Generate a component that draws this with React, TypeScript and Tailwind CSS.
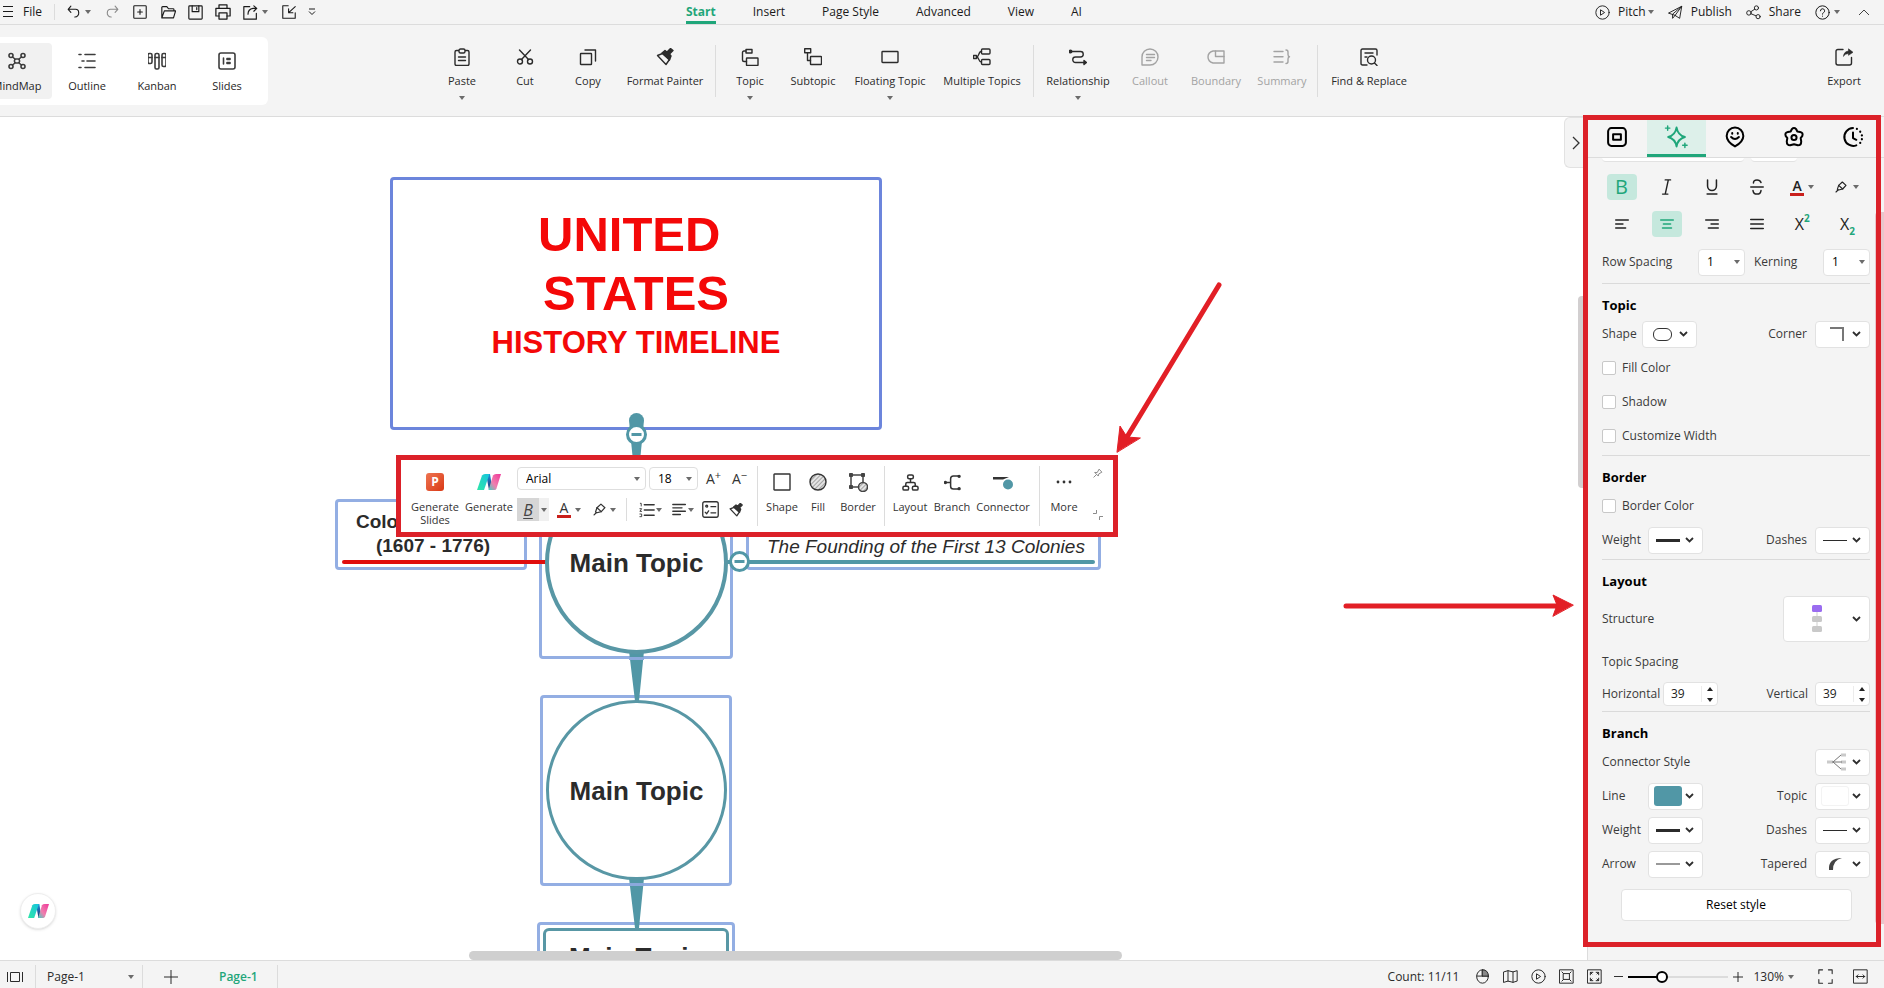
import { useState, type ReactNode } from 'react';
import clsx from 'clsx';

interface IconProps {
    size?: number;
    className?: string;
    width?: number;
    children: ReactNode;
}

const Icon = ({ size = 18, className, width = 1.4, children }: IconProps) => (
    <svg
        width={size}
        height={size}
        viewBox="0 0 18 18"
        fill="none"
        stroke="currentColor"
        strokeWidth={width}
        strokeLinecap="round"
        strokeLinejoin="round"
        className={clsx('shrink-0', className)}
        aria-hidden="true"
    >
        {children}
    </svg>
);

const Caret = ({ className }: { className?: string }) => (
    <svg width="6" height="4" viewBox="0 0 6 4" className={clsx('shrink-0 fill-[#6b6b6b]', className)} aria-hidden="true">
        <path d="M0 0h6L3 4z" />
    </svg>
);

const Chevron = () => (
    <svg width="9" height="6" viewBox="0 0 9 6" className="shrink-0" fill="none" stroke="#2f2f2f" strokeWidth="1.800" aria-hidden="true">
        <path d="M1 1l3.5 3.5L8 1" />
    </svg>
);

const Brand = ({ id, size }: { id: string; size: number }) => (
    <svg width={size} height={size * 0.75} viewBox="0 0 24 18" aria-hidden="true">
        <defs>
            <linearGradient id={`${id}-a`} x1="0" y1="1" x2="1" y2="0">
                <stop offset="0" stopColor="#2fe6a8" />
                <stop offset="1" stopColor="#16c5dd" />
            </linearGradient>
            <linearGradient id={`${id}-b`} x1="0" y1="0" x2="0" y2="1">
                <stop offset="0" stopColor="#1d8fe0" />
                <stop offset="1" stopColor="#22306e" />
            </linearGradient>
            <linearGradient id={`${id}-c`} x1="1" y1="0" x2="0" y2="1">
                <stop offset="0" stopColor="#f0389a" />
                <stop offset="0.6" stopColor="#ef7fae" />
                <stop offset="1" stopColor="#38d6c0" />
            </linearGradient>
        </defs>
        <path d="M9 1h4l2.500 16H12z" fill={`url(#${id}-b)`} />
        <path d="M5 2.5Q6 1 8 1h4.500L7 17H0z" fill={`url(#${id}-a)`} />
        <path d="M16 2.5Q17 1 19 1h5l-4.500 14.500Q19 17 17.500 17H11.500z" fill={`url(#${id}-c)`} />
    </svg>
);

const icons = {
    mindmap: (
        <>
            <rect x="6.500" y="7" width="5" height="4" rx="1.500" />
            <circle cx="3" cy="3.500" r="2" />
            <circle cx="15" cy="3.500" r="2" />
            <circle cx="3" cy="14.500" r="2" />
            <circle cx="15" cy="14.500" r="2" />
            <path d="M4.500 5L7 7M13.500 5L11 7M4.500 13L7 11M13.500 13L11 11" />
        </>
    ),
    outline: <path d="M1 2.500h2M7 2.500h10M4 9h2M9 9h8M1 15.500h2M7 15.500h10" />,
    kanban: (
        <>
            <rect x="0" y="1.500" width="4" height="10" rx="1.500" />
            <rect x="7" y="1.500" width="4" height="15.500" rx="1.500" />
            <rect x="14" y="1.500" width="4" height="13" rx="1.500" />
            <path d="M0 5.500h4M7 5.500h4M14 5.500h4" />
        </>
    ),
    slides: (
        <>
            <rect x="1" y="1" width="16" height="16" rx="2" />
            <path d="M5.500 6v6M9 6.500h3v1H9zM9 10.500h3v1H9z" />
        </>
    ),
    paste: (
        <>
            <rect x="2" y="2.500" width="14" height="15" rx="1.500" />
            <rect x="6" y="1" width="6" height="4" rx="1.500" className="fill-[#f4f4f4]" />
            <path d="M5.500 9h7M5.500 12.500h7" />
        </>
    ),
    cut: (
        <>
            <circle cx="4" cy="13.500" r="2.500" />
            <circle cx="14" cy="13.500" r="2.500" />
            <path d="M3.500 2l9 9.500M14.500 2l-9 9.500" />
        </>
    ),
    copy: (
        <>
            <rect x="1.500" y="5.500" width="11" height="11" rx="0.500" />
            <path d="M6 2h10.500v11" />
        </>
    ),
    painter: (
        <>
            <path d="M1.500 7.500l5-2 7 6-3.500 5z" />
            <path d="M6 5l3-2.500 2 1.500 3.500-3.500L17 2.500 13.500 6l1.500 2-1.500 4z" fill="currentColor" />
        </>
    ),
    topic: (
        <>
            <rect x="5" y="1.500" width="6" height="3.500" />
            <rect x="5.500" y="10" width="11.500" height="7.500" rx="0.500" />
            <path d="M5 3H3Q1.500 3 1.500 4.500V12Q1.500 13.500 3 13.500h2.500" />
        </>
    ),
    subtopic: (
        <>
            <rect x="0.700" y="0.700" width="6" height="4" />
            <rect x="6.500" y="8.500" width="11" height="8" rx="0.500" />
            <path d="M3.500 5v7.500h3" />
        </>
    ),
    floating: <rect x="1" y="3.500" width="16" height="11" rx="0.700" />,
    multiple: (
        <>
            <rect x="8.500" y="1" width="8.500" height="5" rx="1" />
            <rect x="8.500" y="11.500" width="8.500" height="5" rx="1" />
            <rect x="0.500" y="7.500" width="3" height="3" />
            <path d="M8.500 3.500C5 3.500 6.500 9 3.500 9c3 0 1.500 5 5 5" />
        </>
    ),
    relationship: (
        <>
            <path d="M2 3.500h9.500a2.700 2.700 0 0 1 0 5.500h-5a2.700 2.700 0 0 0 0 5.500H15" />
            <circle cx="1.500" cy="3.500" r="1.300" fill="currentColor" />
            <path d="M15 12.500l2.500 2-2.500 2z" fill="currentColor" />
        </>
    ),
    callout: (
        <>
            <path d="M1 17V9a8 8 0 1 1 8 8z" />
            <path d="M5.500 6.500h8M5.500 9.500h8M5.500 12.500h4.500" />
        </>
    ),
    boundary: (
        <>
            <path d="M6 3h11v12H6Q1 13.500 1 9t5-6z" />
            <path d="M8.500 3v5.500H17" />
        </>
    ),
    summary: <path d="M1 3.500h9M1 8.700h9M1 14h9M13 2q2 0 2 2v2.500q0 2 1.500 2.200-1.500.3-1.500 2.300v2.500q0 2-2 2" />,
    find: (
        <>
            <path d="M7 17H2.500Q1 17 1 15.500v-13Q1 1 2.500 1h13Q17 1 17 2.500V7M5 5h8M5 9h2" />
            <circle cx="11.500" cy="12" r="4" />
            <path d="M14.500 15l2.500 2.500" />
        </>
    ),
    export: (
        <>
            <path d="M8 1.500H3Q1 1.500 1 3.500v11.500Q1 17 3 17h11.500q2 0 2-2V9.500" />
            <path d="M8.500 8q.5-4.500 5-5V.8L18 4.300l-4.500 3V5.500Q10 5.500 8.500 8z" fill="currentColor" strokeWidth="0.600" />
        </>
    ),
    undo: <path d="M5 1.500L1.500 5.500 5 9.500M2 5.500h9a4 4 0 0 1 4 4v0a5 5 0 0 1-5 6" />,
    redo: <path d="M13 1.500l3.500 4-3.500 4M16 5.500H7a4 4 0 0 0-4 4v0a5 5 0 0 0 5 6" />,
    newFile: (
        <>
            <rect x="1" y="1" width="16" height="16" rx="1" />
            <path d="M9 6v6M6 9h6" />
        </>
    ),
    folder: <path d="M1 15.500V3q0-1 1-1h5l2 2.500h5.500q1 0 1 1V7M1 15.500L4 7h13.500L15 15.500z" />,
    save: (
        <>
            <rect x="1" y="1" width="16" height="16" rx="1" />
            <path d="M5 1v7h8V1M10.500 3v2.500" />
        </>
    ),
    print: (
        <>
            <path d="M4.500 5V1h9v4M4.500 13.500H1V5h16v8.500h-3.500" />
            <rect x="4.500" y="10" width="9" height="7" />
        </>
    ),
    shareOut: <path d="M8 2H1v15h15v-7M6 11q0-6 6-7h4M13 1l3.500 3L13 7.500" />,
    importIn: <path d="M8 1H1v16h16v-7M17 2L9 9.500M8.500 5v5H14" />,
    play: (
        <>
            <circle cx="9" cy="9" r="8" />
            <path d="M7 6l4.500 3L7 12z" />
        </>
    ),
    plane: <path d="M1 9.500L16.500 1.500 14 16l-5.500-3.500zM8.500 12.500L16.500 1.500 5.500 11v5l3-3.500" />,
    share: (
        <>
            <circle cx="3.500" cy="9.500" r="2.700" />
            <circle cx="12.500" cy="3.500" r="2.500" />
            <circle cx="14.500" cy="14" r="2.500" />
            <path d="M6 8l4.500-3M6 10.500l6 2.500" />
        </>
    ),
    help: (
        <>
            <circle cx="9" cy="9" r="8" />
            <path d="M6.500 7a2.500 2.500 0 1 1 3.500 2.300q-1 .5-1 1.700M9 13.300v.2" />
        </>
    ),
    list: (
        <>
            <path d="M6 3h11M6 9h11M6 15h11" />
            <path d="M1.500 1.500h1V4.500M1 7.500h2l-2 3h2M1 13.500h2v3H1" strokeWidth="1" />
        </>
    ),
    pen: (
        <>
            <path d="M3.500 12.500L5.500 6.500 11 1.500l5.500 5-5 5.500-6 1.500z" />
            <path d="M5.500 6.500l6 5.500M1.500 16.500l3-3" />
        </>
    ),
    checklist: (
        <>
            <rect x="0.800" y="0.800" width="16.400" height="16.400" rx="2" />
            <circle cx="5" cy="5.500" r="1" />
            <path d="M3.500 12l1.500 1.500 2-3M9.500 6h5M9.500 12.500h5" />
        </>
    ),
    pin: <path d="M1.500 16.500L6 12M3.500 8.500l6 6 1-4 5.500-3L11 2 8 7.500z" />,
};

const MENUS = ['Start', 'Insert', 'Page Style', 'Advanced', 'View', 'AI'];

const VIEWS = [
    { label: 'MindMap', icon: icons.mindmap },
    { label: 'Outline', icon: icons.outline },
    { label: 'Kanban', icon: icons.kanban },
    { label: 'Slides', icon: icons.slides },
];

interface RibbonItem {
    label: string;
    icon: ReactNode;
    width: string;
    caret?: boolean;
    disabled?: boolean;
}

const RIBBON: RibbonItem[][] = [
    [
        { label: 'Paste', icon: icons.paste, width: 'w-[62px]', caret: true },
        { label: 'Cut', icon: icons.cut, width: 'w-16' },
        { label: 'Copy', icon: icons.copy, width: 'w-[62px]' },
        { label: 'Format Painter', icon: icons.painter, width: 'w-[92px]' },
    ],
    [
        { label: 'Topic', icon: icons.topic, width: 'w-[62px]', caret: true },
        { label: 'Subtopic', icon: icons.subtopic, width: 'w-16' },
        { label: 'Floating Topic', icon: icons.floating, width: 'w-[90px]', caret: true },
        { label: 'Multiple Topics', icon: icons.multiple, width: 'w-[94px]' },
    ],
    [
        { label: 'Relationship', icon: icons.relationship, width: 'w-[82px]', caret: true },
        { label: 'Callout', icon: icons.callout, width: 'w-[62px]', disabled: true },
        { label: 'Boundary', icon: icons.boundary, width: 'w-[70px]', disabled: true },
        { label: 'Summary', icon: icons.summary, width: 'w-[62px]', disabled: true },
    ],
    [{ label: 'Find & Replace', icon: icons.find, width: 'w-24' }],
];

const RibbonButton = ({ label, icon, width, caret, disabled }: RibbonItem) => (
    <button
        type="button"
        disabled={disabled}
        className={clsx('flex h-full flex-col items-center pt-[23px]', width, disabled ? 'text-[#a3a3a3]' : 'text-[#2b2b2b]')}
    >
        <Icon>{icon}</Icon>
        <span className="mt-[7px] whitespace-nowrap text-[11px] leading-4">{label}</span>
        {caret && <Caret className="mt-[7px]" />}
    </button>
);

const TopBar = () => (
    <header className="flex h-[25px] shrink-0 items-center justify-between border-b border-[#dcdcdc] text-xs leading-4 text-[#1a1a1a]">
        <div className="flex w-[686px] items-center">
            <button type="button" className="flex items-center gap-2 pr-3">
                <svg width="15" height="12" viewBox="0 0 15 12" stroke="currentColor" aria-hidden="true">
                    <path d="M3 .5h10M3 5.500h10M3 10.500h10" />
                </svg>
                File
            </button>
            <span className="h-4 w-px bg-[#dcdcdc]" />
            <button type="button" aria-label="Undo" className="ml-3 flex items-center gap-1">
                <Icon size={14}>{icons.undo}</Icon>
                <Caret />
            </button>
            <button type="button" aria-label="Redo" className="ml-3.5 text-[#8a8a8a]">
                <Icon size={14}>{icons.redo}</Icon>
            </button>
            <button type="button" aria-label="New" className="ml-3.5">
                <Icon size={14}>{icons.newFile}</Icon>
            </button>
            <button type="button" aria-label="Open" className="ml-3.5">
                <Icon size={15}>{icons.folder}</Icon>
            </button>
            <button type="button" aria-label="Save" className="ml-3">
                <Icon size={15}>{icons.save}</Icon>
            </button>
            <button type="button" aria-label="Print" className="ml-3">
                <Icon size={16}>{icons.print}</Icon>
            </button>
            <button type="button" aria-label="Send" className="ml-3 flex items-center gap-1">
                <Icon size={15}>{icons.shareOut}</Icon>
                <Caret />
            </button>
            <button type="button" aria-label="Import" className="ml-3.5">
                <Icon size={14}>{icons.importIn}</Icon>
            </button>
            <button type="button" aria-label="Customize" className="ml-3">
                <svg width="8" height="8" viewBox="0 0 8 8" fill="none" stroke="currentColor" aria-hidden="true">
                    <path d="M1 1h6M1 3.500l3 3 3-3" />
                </svg>
            </button>
        </div>
        <nav className="flex h-full flex-1 gap-[37px]">
            {MENUS.map((menu, index) => (
                <button
                    key={menu}
                    type="button"
                    className={clsx(
                        'h-full border-b-3 pt-0.5',
                        index === 0 ? 'border-[#1fa67a] font-bold text-[#1fa67a]' : 'border-transparent'
                    )}
                >
                    {menu}
                </button>
            ))}
        </nav>
        <div className="flex items-center pr-3.5">
            <button type="button" className="flex items-center">
                <Icon size={15} width={1.1} className="mr-2">{icons.play}</Icon>
                Pitch
                <Caret className="ml-0.5" />
            </button>
            <button type="button" className="ml-3.5 flex items-center gap-2">
                <Icon size={15} width={1.1}>{icons.plane}</Icon>
                Publish
            </button>
            <button type="button" className="ml-3.5 flex items-center gap-2">
                <Icon size={15} width={1.1}>{icons.share}</Icon>
                Share
            </button>
            <button type="button" aria-label="Help" className="ml-3.5 flex items-center gap-1">
                <Icon size={15} width={1.2}>{icons.help}</Icon>
                <Caret />
            </button>
            <button type="button" aria-label="Collapse ribbon" className="ml-[18px]">
                <svg width="12" height="7" viewBox="0 0 12 7" fill="none" stroke="#444" aria-hidden="true">
                    <path d="M1 6l5-5 5 5" />
                </svg>
            </button>
        </div>
    </header>
);

const Ribbon = () => (
    <div className="flex h-[92px] shrink-0 items-start border-b border-[#dcdcdc]">
        <div className="mt-3 flex h-[68px] w-[268px] shrink-0 items-center justify-end overflow-hidden rounded-r-md bg-white pr-1.5">
            {VIEWS.map((view, index) => (
                <button
                    key={view.label}
                    type="button"
                    className={clsx(
                        'flex h-14 w-[70px] shrink-0 flex-col items-center rounded pt-[9px] text-[#3c3c3c]',
                        index === 0 && 'bg-[#f1f1f1]'
                    )}
                >
                    <Icon width={1.6}>{view.icon}</Icon>
                    <span className="mt-2 text-[11px] leading-4 text-[#1f1f1f]">{view.label}</span>
                </button>
            ))}
        </div>
        <div className="ml-[163px] flex h-full">
            {RIBBON.map((group, index) => (
                <div key={index} className="flex h-full">
                    {index > 0 && <span className="ml-1 mr-[3px] mt-5 h-[52px] w-px bg-[#dcdcdc]" />}
                    {group.map((item) => (
                        <RibbonButton key={item.label} {...item} />
                    ))}
                </div>
            ))}
        </div>
        <div className="ml-auto h-full pr-2.5">
            <RibbonButton label="Export" icon={icons.export} width="w-[60px]" />
        </div>
    </div>
);

const ToolButton = ({ label, children, className }: { label: string; children: ReactNode; className: string }) => (
    <button type="button" className={clsx('flex flex-col items-center', className)}>
        <span className="flex h-6 items-center">{children}</span>
        <span className="mt-1.5 text-center text-[11px] leading-[13px]">{label}</span>
    </button>
);

const Hatch = ({ cx, cy, r }: { cx: number; cy: number; r: number }) => (
    <>
        <defs>
            <pattern id="hatch" width="3" height="3" patternUnits="userSpaceOnUse" patternTransform="rotate(45)">
                <rect width="3" height="3" fill="#e4e4e4" stroke="none" />
                <path d="M0 0v3" stroke="#8e8e8e" strokeWidth="1.500" />
            </pattern>
        </defs>
        <circle cx={cx} cy={cy} r={r} fill="url(#hatch)" />
    </>
);

const FloatingToolbar = () => (
    <div
        role="toolbar"
        aria-label="Topic format"
        className="absolute left-[396px] top-[338px] flex h-[82px] w-[722px] items-start border-5 border-[#dc2129] bg-white pt-1.5 text-[#333]"
    >
        <div className="flex pl-1.5 pt-1">
            <ToolButton label="Generate Slides" className="w-[56px]">
                <span className="flex size-[18px] items-center justify-center rounded-[3px] bg-linear-to-br from-[#ee7350] to-[#d9370f] text-xs font-bold text-white">
                    P
                </span>
            </ToolButton>
            <ToolButton label="Generate" className="w-[52px]">
                <Brand id="toolbar" size={24} />
            </ToolButton>
        </div>
        <div className="flex flex-col gap-2 pl-0.5 pt-px">
            <div className="flex h-[23px] items-center">
                <label className="relative flex items-center">
                    <select aria-label="Font family" className="h-[23px] w-[129px] appearance-none rounded border border-[#dedede] pl-2 text-xs text-black">
                        <option>Arial</option>
                    </select>
                    <Caret className="absolute right-1.5" />
                </label>
                <label className="relative ml-[3px] flex items-center">
                    <select aria-label="Font size" className="h-[23px] w-[49px] appearance-none rounded border border-[#dedede] pl-2 text-xs text-black">
                        <option>18</option>
                    </select>
                    <Caret className="absolute right-1.5" />
                </label>
                <button type="button" aria-label="Increase font size" className="ml-2 flex w-4 text-sm leading-5">
                    A<sup className="top-0 text-[11px] leading-3">+</sup>
                </button>
                <button type="button" aria-label="Decrease font size" className="ml-2.5 flex w-4 text-sm leading-5">
                    A<sup className="top-0 text-[11px] leading-3">−</sup>
                </button>
            </div>
            <div className="flex h-[23px] items-center">
                <button type="button" aria-label="Bold" className="flex h-[23px] w-8 items-center bg-[#f0f0f0]">
                    <span className="flex h-full w-[22px] items-center justify-center bg-[#d6d6d6] text-base font-medium italic leading-5 text-[#444] underline underline-offset-2">
                        B
                    </span>
                    <Caret className="ml-0.5" />
                </button>
                <button type="button" aria-label="Font color" className="ml-2 flex items-center gap-1">
                    <span className="h-[17px] w-3.5 border-b-3 border-[#c9201c] text-center text-sm font-medium leading-[14px]">A</span>
                    <Caret />
                </button>
                <button type="button" aria-label="Highlight" className="ml-3 flex items-center gap-1">
                    <Icon size={13} width={1.700}>{icons.pen}</Icon>
                    <Caret />
                </button>
                <span className="ml-2.5 h-[23px] w-px bg-[#dcdcdc]" />
                <button type="button" aria-label="Numbering" className="ml-3 flex items-center gap-px">
                    <Icon size={16} width={1.700}>{icons.list}</Icon>
                    <Caret />
                </button>
                <button type="button" aria-label="Alignment" className="ml-2.5 flex items-center gap-px">
                    <Icon size={15} width={1.700}>
                        <path d="M1 3h15M1 7h11M1 11h15M1 15h9" />
                    </Icon>
                    <Caret />
                </button>
                <button type="button" aria-label="Checklist" className="ml-2">
                    <Icon size={17}>{icons.checklist}</Icon>
                </button>
                <button type="button" aria-label="Format painter" className="ml-2.5">
                    <Icon size={14} width={1.700}>{icons.painter}</Icon>
                </button>
            </div>
        </div>
        <span className="ml-[9px] h-[60px] w-px bg-[#dcdcdc]" />
        <div className="flex pl-1 pt-1">
            <ToolButton label="Shape" className="w-10">
                <Icon>
                    <rect x="1" y="1" width="16" height="16" rx="0.500" />
                </Icon>
            </ToolButton>
            <ToolButton label="Fill" className="w-8">
                <Icon>
                    <Hatch cx={9} cy={9} r={8} />
                </Icon>
            </ToolButton>
            <ToolButton label="Border" className="w-12">
                <svg width="20" height="20" viewBox="0 0 20 20" fill="none" stroke="#444" strokeWidth="1.500" aria-hidden="true">
                    <rect x="3" y="3" width="12" height="12" />
                    <path d="M1.500 1.500h3v3h-3zM13.500 1.500h3v3h-3zM1.500 13.500h3v3h-3z" fill="#444" strokeWidth="1" />
                    <Hatch cx={15} cy={15} r={4.500} />
                </svg>
            </ToolButton>
        </div>
        <span className="ml-0.5 h-[60px] w-px bg-[#dcdcdc]" />
        <div className="flex pl-1 pt-1">
            <ToolButton label="Layout" className="w-[42px]">
                <Icon size={17} width={1.600}>
                    <rect x="6" y="1" width="6" height="4" rx="1.500" />
                    <rect x="1" y="13" width="6" height="4" rx="1.500" />
                    <rect x="11" y="13" width="6" height="4" rx="1.500" />
                    <path d="M9 5v3M4 13v-2.500Q4 9 5.500 9h7Q14 9 14 10.500V13" />
                </Icon>
            </ToolButton>
            <ToolButton label="Branch" className="w-[42px]">
                <Icon size={17} width={1.600}>
                    <circle cx="1.500" cy="9" r="1" fill="currentColor" />
                    <path d="M3 9h4M16 2h-6Q7 2 7 5v8q0 3 3 3h6" />
                    <circle cx="16" cy="2.500" r="1" fill="currentColor" />
                    <circle cx="16" cy="15.500" r="1" fill="currentColor" />
                </Icon>
            </ToolButton>
            <ToolButton label="Connector" className="w-[60px]">
                <svg width="22" height="16" viewBox="0 0 22 16" aria-hidden="true">
                    <path d="M1 3h16l-6 2.500H1z" fill="#333" />
                    <circle cx="16" cy="10.500" r="5" fill="#5197a6" />
                </svg>
            </ToolButton>
        </div>
        <span className="ml-1.5 h-[60px] w-px bg-[#dcdcdc]" />
        <div className="flex pl-1 pt-1">
            <ToolButton label="More" className="w-10">
                <svg width="16" height="4" viewBox="0 0 16 4" fill="#333" aria-hidden="true">
                    <circle cx="2" cy="2" r="1.400" />
                    <circle cx="8" cy="2" r="1.400" />
                    <circle cx="14" cy="2" r="1.400" />
                </svg>
            </ToolButton>
        </div>
        <div className="ml-auto flex h-full flex-col justify-between pb-3 pr-2.5 pt-0.5 text-[#8c8c8c]">
            <button type="button" aria-label="Pin toolbar">
                <Icon size={10} width={1.800}>{icons.pin}</Icon>
            </button>
            <button type="button" aria-label="Shrink toolbar">
                <svg width="10" height="10" viewBox="0 0 10 10" fill="none" stroke="currentColor" aria-hidden="true">
                    <path d="M0 3.500h3.500V0M10 6.500H6.500V10" />
                </svg>
            </button>
        </div>
    </div>
);

const Diagram = () => (
    <div className="relative min-h-0 flex-1 overflow-hidden [font-family:'Liberation_Sans',Arial,sans-serif]">
        <div className="absolute left-[390px] top-[60px] flex h-[253px] w-[492px] flex-col items-center rounded border-3 border-[#6c85dc] pt-[25px] font-bold text-[#f40808]">
            <p className="whitespace-pre text-[49px] leading-[59px]">{'UNITED '}</p>
            <p className="text-[49px] leading-[59px]">STATES</p>
            <p className="text-[31px] leading-10">HISTORY TIMELINE</p>
        </div>

        <div className="absolute left-[335px] top-[382px] flex h-[71px] w-[192px] flex-col items-center rounded border-3 border-[#93aee3] pl-1 pt-2 text-[19px] font-bold leading-6 text-[#2b2b2b]">
            <span className="self-start pl-3.5">Colo</span>
            <span>(1607 - 1776)</span>
        </div>
        <div className="absolute left-[746px] top-[382px] h-[71px] w-[355px] rounded border-3 border-[#93aee3] pl-[18px] pt-[33px] text-[19px] italic leading-6 text-[#2b2b2b]">
            The Founding of the First 13 Colonies
        </div>
        <div className="absolute left-[539px] top-[348px] h-[194px] w-[194px] rounded border-3 border-[#93aee3]" />
        <div className="absolute left-[540px] top-[578px] h-[191px] w-[192px] rounded border-3 border-[#93aee3]" />
        <div className="absolute left-[537px] top-[805px] h-[80px] w-[198px] rounded border-3 border-[#93aee3]" />

        <svg className="absolute left-0 top-0 h-full w-full" aria-hidden="true">
            <path d="M629 303.500a7.500 7.500 0 0 1 15 0L639 354h-5z" fill="#5197a6" />
            <path d="M629 534h15l-5 50h-4zM629 761h15l-5 50h-4z" fill="#5197a6" />
            <path d="M629 541.500h15M629 767.500h15" stroke="#8ba9dc" strokeWidth="3" />
            <path d="M344 445h203" stroke="#e00d0d" strokeWidth="4" strokeLinecap="round" />
            <path d="M728 445h365" stroke="#5197a6" strokeWidth="4" strokeLinecap="round" />
            <g fill="white" stroke="#5197a6" strokeWidth="3">
                <circle cx="636.500" cy="317.500" r="9" />
                <circle cx="739.500" cy="444.500" r="9" />
                <path d="M631.500 317.500h10M734.500 444.500h10" />
            </g>
        </svg>

        <div className="absolute left-[545px] top-[354px] flex h-[183px] w-[183px] items-center justify-center rounded-full border-4 border-[#5897a5] bg-white pt-0.5 text-[26px] font-bold text-[#2b2b2b]">
            Main Topic
        </div>
        <div className="absolute left-[546px] top-[583px] flex h-[180px] w-[181px] items-center justify-center rounded-full border-3 border-[#5897a5] bg-white pt-0.5 text-[26px] font-bold text-[#2b2b2b]">
            Main Topic
        </div>
        <div className="absolute left-[543px] top-[811px] flex h-[60px] w-[186px] justify-center rounded-md border-3 border-[#5897a5] bg-white pt-2.5 text-[26px] font-bold leading-8 text-[#2b2b2b]">
            Main Topic
        </div>

        <svg className="absolute left-0 top-0 h-full w-full" aria-hidden="true">
            <g stroke="#e21f26" strokeWidth="5" strokeLinecap="round" fill="#e21f26">
                <path d="M1219 168l-92 152M1346 489h214" />
                <path d="M1117 335l3-26 7 11 13 1zM1573 488l-20-10 4 10-4 11z" strokeWidth="1" />
            </g>
        </svg>
    </div>
);

const Canvas = () => (
    <main className="relative flex min-w-0 flex-1 flex-col bg-white">
        <Diagram />
        <div className="h-[9px] shrink-0 bg-white pl-[469px]">
            <div className="h-full w-[653px] rounded-full bg-[#cfcfcf]" />
        </div>
        <div className="absolute right-0 top-[179px] h-[192px] w-[9px] rounded bg-[#d2cfd0]" />
        <button
            type="button"
            aria-label="Hide panel"
            className="absolute right-0 top-0 flex h-[51px] w-[23px] items-center rounded-l-md border-y border-l border-[#e2e2e2] bg-[#f4f4f4] pl-[7px]"
        >
            <svg width="8" height="14" viewBox="0 0 8 14" fill="none" stroke="#333" strokeWidth="1.300" aria-hidden="true">
                <path d="M1 1l6 6-6 6" />
            </svg>
        </button>
        <button
            type="button"
            aria-label="AI assistant"
            className="absolute bottom-[31px] left-5 flex size-9 items-center justify-center rounded-full border border-[#eee] bg-white shadow-sm"
        >
            <Brand id="assistant" size={21} />
        </button>
        <div className="[font-family:'Open_Sans','Noto_Sans',sans-serif]">
            <FloatingToolbar />
        </div>
    </main>
);

const PANEL_TABS = [
    {
        label: 'Page',
        icon: (
            <>
                <rect x="1" y="1" width="16" height="16" rx="3" />
                <rect x="5.500" y="6.500" width="7" height="5" />
            </>
        ),
    },
    {
        label: 'Style',
        icon: (
            <>
                <path d="M9.500 0.500q1.200 6.800 7.500 8.500-6.300 1.700-7.500 8.500Q8.300 10.700 2 9 8.300 7.300 9.500.5z" />
                <path d="M1.500-1v4M-.5 1h4M17 14.500v4M15 16.500h4" strokeWidth="1.300" />
            </>
        ),
    },
    {
        label: 'Clipart',
        icon: (
            <>
                <path d="M9 17.500Q1.500 13 1.500 8a7.500 7.500 0 0 1 15 0q0 5-7.500 9.500z" />
                <path d="M6.500 5.500v.5M11.500 5.500v.5M5.500 9q3.500 3.500 7 0" />
            </>
        ),
    },
    {
        label: 'Theme',
        icon: (
            <>
                <path d="M7 2q2-2 4 0l1 2 2.500.5q3 .7 2 3.500L15 10l.5 3q0 3.500-3 3.500L9 15.500l-3.500 1q-3 0-3-3.500L3 10 1.500 8q-1-2.800 2-3.500L6 4z" />
                <circle cx="9" cy="9.500" r="2.300" />
            </>
        ),
    },
    {
        label: 'History',
        icon: (
            <>
                <path d="M9 1a8 8 0 1 0 3 15.500M9 5v5l3 1.500" />
                <path d="M12.500 1.700v.1M15.500 4.200v.1M17 7.500v.1M17 11v.1M15.500 14.200v.1" strokeWidth="2" />
            </>
        ),
    },
];

const Heading = ({ children }: { children: ReactNode }) => (
    <h2 className="h-8 pt-3 text-[13px] font-bold leading-[18px] text-black">{children}</h2>
);

const Row = ({ children }: { children: ReactNode }) => (
    <div className="flex h-[34px] items-center justify-between pt-0.5">{children}</div>
);

const Section = ({ title, children }: { title: string; children: ReactNode }) => (
    <section className="border-t border-[#dadada] pb-[3px]">
        <Heading>{title}</Heading>
        {children}
    </section>
);

interface PickerProps {
    label: string;
    labelWidth?: string;
    children: ReactNode;
}

const Picker = ({ label, labelWidth, children }: PickerProps) => (
    <div className="flex items-center">
        <span className={clsx('mr-2', labelWidth)}>{label}</span>
        <button
            type="button"
            aria-label={label}
            aria-haspopup="listbox"
            className="flex h-[27px] w-[55px] items-center justify-between rounded border border-[#e2e2e2] bg-white pl-[3px] pr-2"
        >
            <span className="flex w-8 justify-center">{children}</span>
            <Chevron />
        </button>
    </div>
);

const Check = ({ label }: { label: string }) => {
    const [checked, setChecked] = useState(false);
    return (
        <Row>
            <label className="flex items-center gap-1.5">
                <input
                    type="checkbox"
                    checked={checked}
                    onChange={(event) => setChecked(event.target.checked)}
                    className="size-3.5 appearance-none rounded-[2px] border border-[#c8c8c8] bg-white checked:bg-[#1fa67a]"
                />
                {label}
            </label>
        </Row>
    );
};

const SmallSelect = ({ label }: { label: string }) => (
    <label className="relative flex items-center">
        {label}
        <select className="ml-auto h-[27px] w-[47px] appearance-none rounded border border-[#e2e2e2] bg-white pl-2 text-xs text-black">
            <option>1</option>
        </select>
        <Caret className="absolute right-[5px]" />
    </label>
);

const Stepper = ({ label, labelWidth }: { label: string; labelWidth?: string }) => {
    const [value, setValue] = useState(39);
    return (
        <div className="flex items-center gap-[7px]">
            <label htmlFor={`spacing-${label}`} className={labelWidth}>{label}</label>
            <div className="flex h-6 w-[55px] items-center rounded border border-[#e2e2e2] bg-white">
                <input
                    id={`spacing-${label}`}
                    inputMode="numeric"
                    value={value}
                    onChange={(event) => setValue(Number(event.target.value) || 0)}
                    className="w-[38px] border-r border-[#ececec] pl-[7px] text-[#222] outline-none"
                />
                <div className="flex flex-1 flex-col items-center gap-[7px]">
                    <button type="button" aria-label={`Increase ${label}`} onClick={() => setValue(value + 1)}>
                        <Caret className="block rotate-180 fill-[#222]" />
                    </button>
                    <button type="button" aria-label={`Decrease ${label}`} onClick={() => setValue(value - 1)}>
                        <Caret className="block fill-[#222]" />
                    </button>
                </div>
            </div>
        </div>
    );
};

const FormatButton = ({ label, active, children }: { label: string; active?: boolean; children: ReactNode }) => (
    <button
        type="button"
        aria-label={label}
        aria-pressed={active}
        className={clsx('flex h-[26px] w-[30px] items-center justify-center justify-self-center rounded', active ? 'bg-[#c5e8dd] text-[#1fa67a]' : 'text-[#222]')}
    >
        {children}
    </button>
);

const solid = <span className="h-[3px] w-6 bg-[#2b2b2b]" />;
const thin = <span className="h-px w-6 bg-[#2b2b2b]" />;

const StylePanel = () => (
    <aside className="relative flex w-[297px] shrink-0 flex-col border-l border-[#dcdcdc] text-xs leading-4 text-[#3a3a3a]">
        <div role="tablist" className="flex h-[41px] shrink-0 border-b border-[#dcdcdc] pr-0.5">
            {PANEL_TABS.map((tab, index) => (
                <button
                    key={tab.label}
                    type="button"
                    role="tab"
                    aria-label={tab.label}
                    aria-selected={index === 1}
                    className={clsx(
                        'flex h-10 flex-1 items-center justify-center border-b-3 pt-[3px]',
                        index === 1 ? 'border-[#1fa67a] bg-[#ddf0ea] text-[#1fa67a]' : 'border-transparent text-black'
                    )}
                >
                    <Icon size={20} width={1.800} className="overflow-visible">{tab.icon}</Icon>
                </button>
            ))}
        </div>
        <div className="flex-1 px-3.5">
            <div className="flex gap-[7px]">
                <span className="h-1 w-[142px] rounded-b border-b border-[#e2e2e2] bg-white" />
                <span className="h-1 w-[46px] rounded-b border-b border-[#e2e2e2] bg-white" />
            </div>
            <div className="-ml-[3px] grid grid-cols-6 gap-y-[11px] pt-3">
                <FormatButton label="Bold" active>
                    <span className="text-xl font-medium leading-5">B</span>
                </FormatButton>
                <FormatButton label="Italic">
                    <Icon size={16} width={1.600}>
                        <path d="M7 1h6M4 17h6M10.500 1L7 17" />
                    </Icon>
                </FormatButton>
                <FormatButton label="Underline">
                    <Icon size={16} width={1.700}>
                        <path d="M4 1v7a5 5 0 0 0 10 0V1M3.500 17h11" />
                    </Icon>
                </FormatButton>
                <FormatButton label="Strikethrough">
                    <Icon size={16} width={1.700}>
                        <path d="M2 9h14M13.500 4q-1-3-4.500-3-4 0-4 3.500M4.500 13q.5 4 4.500 4t4.500-4" />
                    </Icon>
                </FormatButton>
                <FormatButton label="Font color">
                    <span className="flex items-center gap-1">
                        <span className="h-[17px] w-3.5 border-b-3 border-[#c9201c] text-center text-sm font-semibold leading-[14px]">A</span>
                        <Caret />
                    </span>
                </FormatButton>
                <FormatButton label="Highlight">
                    <span className="flex items-center gap-1.5">
                        <Icon size={12} width={1.700}>{icons.pen}</Icon>
                        <Caret />
                    </span>
                </FormatButton>
                <FormatButton label="Align left">
                    <Icon size={16} width={1.800}>
                        <path d="M2 4.500h14M2 9h8M2 13.500h11" />
                    </Icon>
                </FormatButton>
                <FormatButton label="Align center" active>
                    <Icon size={16} width={1.800}>
                        <path d="M2 4.500h14M5 9h8M4 13.500h10" />
                    </Icon>
                </FormatButton>
                <FormatButton label="Align right">
                    <Icon size={16} width={1.800}>
                        <path d="M2 4.500h14M8 9h8M5 13.500h11" />
                    </Icon>
                </FormatButton>
                <FormatButton label="Justify">
                    <Icon size={16} width={1.800}>
                        <path d="M2 4h14M2 9h14M2 14h14" />
                    </Icon>
                </FormatButton>
                <FormatButton label="Superscript">
                    <span className="flex text-base leading-5">
                        X<sup className="top-0 text-[10px] font-bold leading-2 text-[#1fa67a]">2</sup>
                    </span>
                </FormatButton>
                <FormatButton label="Subscript">
                    <span className="flex items-end text-base leading-5">
                        X<sub className="text-[10px] font-bold leading-3 text-[#1fa67a]">2</sub>
                    </span>
                </FormatButton>
            </div>
            <div className="grid h-[46px] grid-cols-[143px_1fr] items-center gap-x-[9px] pt-1">
                <SmallSelect label="Row Spacing" />
                <SmallSelect label="Kerning" />
            </div>

            <Section title="Topic">
                <Row>
                    <Picker label="Shape" labelWidth="w-8">
                        <span className="h-[13px] w-[19px] rounded-[6px] border border-[#333]" />
                    </Picker>
                    <Picker label="Corner">
                        <span className="ml-1 h-3.5 w-3.5 border-r-2 border-t-2 border-[#777]" />
                    </Picker>
                </Row>
                <Check label="Fill Color" />
                <Check label="Shadow" />
                <Check label="Customize Width" />
            </Section>

            <Section title="Border">
                <Check label="Border Color" />
                <Row>
                    <Picker label="Weight" labelWidth="w-[38px]">{solid}</Picker>
                    <Picker label="Dashes">{thin}</Picker>
                </Row>
            </Section>

            <Section title="Layout">
                <div className="flex h-[52px] items-center justify-between pt-px">
                    <span>Structure</span>
                    <button
                        type="button"
                        aria-label="Structure"
                        aria-haspopup="listbox"
                        className="flex h-[46px] w-[87px] items-center justify-between rounded border border-[#e2e2e2] bg-white pl-7 pr-2"
                    >
                        <svg width="10" height="28" viewBox="0 0 10 28" aria-hidden="true">
                            <path d="M5 6v18" stroke="#cfcfcf" />
                            <rect width="10" height="7" rx="1.500" fill="#9a6cf0" />
                            <rect y="11" width="10" height="6" rx="1.500" fill="#c9c9c9" />
                            <rect y="21" width="10" height="6" rx="1.500" fill="#c9c9c9" />
                        </svg>
                        <Chevron />
                    </button>
                </div>
                <div className="flex h-9 items-center">Topic Spacing</div>
                <div className="flex h-7 items-end justify-between pb-0.5">
                    <Stepper label="Horizontal" labelWidth="w-[54px]" />
                    <Stepper label="Vertical" />
                </div>
            </Section>

            <Section title="Branch">
                <Row>
                    <span>Connector Style</span>
                    <button
                        type="button"
                        aria-label="Connector Style"
                        aria-haspopup="listbox"
                        className="flex h-[27px] w-[55px] items-center justify-between rounded border border-[#e2e2e2] bg-white pl-[11px] pr-2"
                    >
                        <svg width="20" height="18" viewBox="0 0 20 18" fill="none" aria-hidden="true">
                            <path d="M0 9h6M14 2h5M14 9h5M14 16h5" stroke="#cacaca" strokeWidth="3" />
                            <path d="M5 9h10M6 9l8-7M6 9l8 7" stroke="#777" />
                        </svg>
                        <Chevron />
                    </button>
                </Row>
                <Row>
                    <Picker label="Line" labelWidth="w-[38px]">
                        <span className="h-5 w-7 shrink-0 rounded-[3px] bg-[#5197a6]" />
                    </Picker>
                    <Picker label="Topic">
                        <span className="h-5 w-7 shrink-0 rounded-[3px] border border-[#f3f3f3] bg-white" />
                    </Picker>
                </Row>
                <Row>
                    <Picker label="Weight" labelWidth="w-[38px]">{solid}</Picker>
                    <Picker label="Dashes">{thin}</Picker>
                </Row>
                <Row>
                    <Picker label="Arrow" labelWidth="w-[38px]">
                        <span className="h-0.5 w-6 bg-[#999]" />
                    </Picker>
                    <Picker label="Tapered">
                        <svg width="16" height="14" viewBox="0 0 16 14" fill="#444" aria-hidden="true">
                            <path d="M2 13Q1 1 15 1 6 3 6 13z" />
                        </svg>
                    </Picker>
                </Row>
                <button type="button" className="mx-auto mt-[9px] block h-8 w-[231px] rounded border border-[#e2e2e2] bg-white font-medium text-black">
                    Reset style
                </button>
            </Section>
        </div>
        <div className="absolute bottom-9 right-0 top-[95px] w-[9px] rounded-l bg-[#e8c6cb]" />
        <div className="pointer-events-none absolute -left-[5px] -top-0.5 bottom-[13px] right-[3px] border-5 border-[#dc2129]" />
    </aside>
);

const StatusBar = () => {
    const [zoom, setZoom] = useState(130);
    return (
        <footer className="flex h-7 shrink-0 items-center border-t border-[#dcdcdc] pt-1 text-xs text-[#2b2b2b]">
            <button type="button" aria-label="Page list" className="ml-[7px]">
                <svg width="16" height="12" viewBox="0 0 16 12" fill="none" stroke="currentColor" aria-hidden="true">
                    <path d="M.5 1v10M15.500 1v10M3.500 1.500h9v9h-9z" />
                </svg>
            </button>
            <label className="relative ml-3 flex h-full items-center border-x border-[#dcdcdc]">
                <select aria-label="Page" className="w-[106px] appearance-none pl-[11px]">
                    <option>Page-1</option>
                </select>
                <Caret className="absolute right-2" />
            </label>
            <button type="button" aria-label="Add page" className="ml-[21px]">
                <svg width="14" height="14" viewBox="0 0 14 14" stroke="currentColor" aria-hidden="true">
                    <path d="M7 0v14M0 7h14" />
                </svg>
            </button>
            <button type="button" className="ml-[22px] h-full border-r border-[#dcdcdc] px-[19px] font-semibold text-[#1fa67a]">
                Page-1
            </button>
            <span className="ml-auto">Count: 11/11</span>
            <div className="ml-4 flex items-center gap-[13px]">
                <button type="button" aria-label="Mouse mode">
                    <Icon size={15} width={1.200}>
                        <ellipse cx="9" cy="9" rx="7" ry="8" />
                        <path d="M2 8.500h14M9 1v7.500" />
                        <path d="M9 1q7 0 7 7.500H9z" fill="#888" />
                    </Icon>
                </button>
                <button type="button" aria-label="Overview">
                    <Icon size={15} width={1.200}>
                        <path d="M1 3.500l5-1.500 6 1.500 5-1.500v12.500l-5 1.500-6-1.500-5 1.500zM6 2v12.500M12 3.500V16" />
                    </Icon>
                </button>
                <button type="button" aria-label="Presentation">
                    <Icon size={15} width={1.200}>{icons.play}</Icon>
                </button>
                <button type="button" aria-label="Fit map">
                    <Icon size={15} width={1.200}>
                        <path d="M1 1h16v16H1zM5.500 5.500h7v7h-7zM5.500 5.500L3.500 3.500M12.500 5.500l2-2M5.500 12.500l-2 2M12.500 12.500l2 2" />
                    </Icon>
                </button>
                <button type="button" aria-label="Fit selection">
                    <Icon size={15} width={1.200}>
                        <path d="M1 1h16v16H1zM4 7V4h3M11 4h3v3M14 11v3h-3M7 14H4v-3M4 4l2 2M14 4l-2 2M4 14l2-2M14 14l-2-2" />
                    </Icon>
                </button>
            </div>
            <button type="button" aria-label="Zoom out" className="ml-3 flex h-3 w-[9px] items-center" onClick={() => setZoom(zoom - 10)}>
                <span className="block h-px w-full bg-[#333]" />
            </button>
            <input
                type="range"
                min={10}
                max={400}
                value={zoom}
                aria-label="Zoom"
                onChange={(event) => setZoom(Number(event.target.value))}
                className="mx-[5px] h-0.5 w-[100px] appearance-none bg-linear-to-r from-black from-33% to-[#dcdcdc] to-33% [&::-webkit-slider-thumb]:size-3 [&::-webkit-slider-thumb]:appearance-none [&::-webkit-slider-thumb]:rounded-full [&::-webkit-slider-thumb]:border-2 [&::-webkit-slider-thumb]:border-black [&::-webkit-slider-thumb]:bg-white"
            />
            <button type="button" aria-label="Zoom in" onClick={() => setZoom(zoom + 10)}>
                <svg width="10" height="10" viewBox="0 0 10 10" stroke="currentColor" aria-hidden="true">
                    <path d="M5 0v10M0 5h10" />
                </svg>
            </button>
            <button type="button" className="ml-2.5 flex items-center gap-1">
                {zoom}%
                <Caret />
            </button>
            <button type="button" aria-label="Full screen" className="ml-6">
                <Icon size={15} width={1.300}>
                    <path d="M1 5.500V1h4.500M12.500 1H17v4.500M17 12.500V17h-4.500M5.500 17H1v-4.500" />
                </Icon>
            </button>
            <button type="button" aria-label="Fit width" className="ml-5 mr-4">
                <Icon size={15} width={1.200}>
                    <path d="M1 1h16v16H1zM4 9h10M6 7L4 9l2 2M12 7l2 2-2 2" />
                </Icon>
            </button>
        </footer>
    );
};

export default function App() {
    return (
        <div className="flex h-screen flex-col overflow-hidden bg-[#f4f4f4] [font-family:'Open_Sans','Noto_Sans',sans-serif]">
            <TopBar />
            <Ribbon />
            <div className="flex min-h-0 flex-1">
                <Canvas />
                <StylePanel />
            </div>
            <StatusBar />
        </div>
    );
}
